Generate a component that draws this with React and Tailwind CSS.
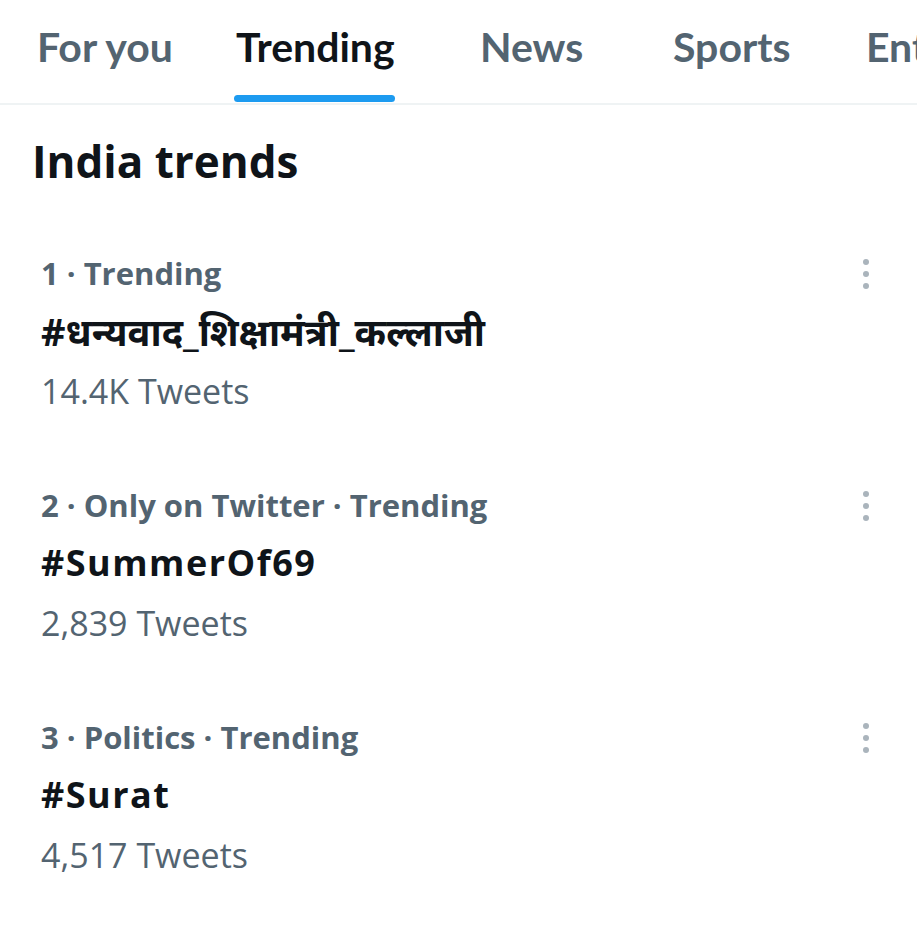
const tabs = [
  { label: "For you", w: "w-[199px]" },
  { label: "Trending", w: "w-[244px]", active: true },
  { label: "News", w: "w-[193px]" },
  { label: "Sports", w: "w-[193px]" },
  { label: "Entertainment", w: "w-[300px]" },
];

const trends = [
  {
    meta: "1 · Trending",
    tag: "#धन्यवाद_शिक्षामंत्री_कल्लाजी",
    tagClass: "text-[38px]",
    count: "14.4K Tweets",
  },
  {
    meta: "2 · Only on Twitter · Trending",
    tag: "#SummerOf69",
    tagClass: "text-[36px] tracking-[1.5px]",
    count: "2,839 Tweets",
  },
  {
    meta: "3 · Politics · Trending",
    tag: "#Surat",
    tagClass: "text-[36px] tracking-[1.5px]",
    count: "4,517 Tweets",
  },
];

const MoreDots = () => (
  <div className="flex flex-col items-center gap-[6px] pt-[4px]">
    <span className="h-[6px] w-[6px] rounded-full bg-[#aab4bc]" />
    <span className="h-[6px] w-[6px] rounded-full bg-[#aab4bc]" />
    <span className="h-[6px] w-[6px] rounded-full bg-[#aab4bc]" />
  </div>
);

const App = () => {
  return (
    <div className="h-[945px] w-[917px] overflow-hidden bg-white font-['Open_Sans','Noto_Sans',sans-serif]">
      {/* tab bar */}
      <div className="flex h-[105px] items-start overflow-hidden whitespace-nowrap border-b-2 border-[#eff3f4] pl-[37px]">
        {tabs.map((tab) => (
          <div key={tab.label} className={`shrink-0 ${tab.w}`}>
            <div className="inline-block pt-[21px]">
              <span
                className={`block font-['Lato',sans-serif] text-[41px] font-bold leading-[52px] ${
                  tab.active ? "text-[#0f1419]" : "text-[#536471]"
                }`}
              >
                {tab.label}
              </span>
              {tab.active && (
                <div className="-ml-[2px] mt-[22px] h-[7px] w-[calc(100%+2px)] rounded-full bg-[#1d9bf0]" />
              )}
            </div>
          </div>
        ))}
      </div>

      <h1 className="pl-[32px] pt-[30px] text-[44px] font-bold leading-[52px] text-[#0f1419]">
        India trends
      </h1>

      <div className="mt-[68px]">
        {trends.map((trend) => (
          <div key={trend.meta} className="flex h-[232px] items-start pl-[41px] pr-[48px]">
            <div className="flex-1">
              <div className="text-[31px] font-bold leading-[36px] text-[#536471]">
                {trend.meta}
              </div>
              <div className={`mt-[20px] font-bold leading-[40px] text-[#0f1419] ${trend.tagClass}`}>
                {trend.tag}
              </div>
              <div className="mt-[20px] text-[34px] leading-[40px] text-[#536471]">
                {trend.count}
              </div>
            </div>
            <MoreDots />
          </div>
        ))}
      </div>
    </div>
  );
};

export default App;
